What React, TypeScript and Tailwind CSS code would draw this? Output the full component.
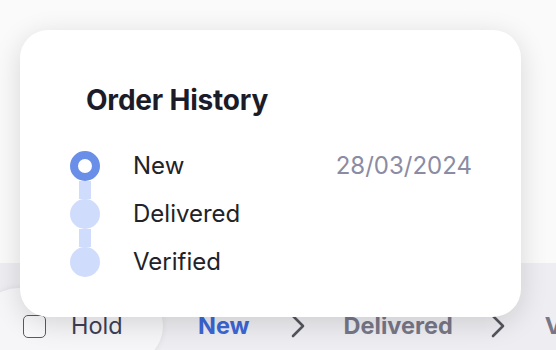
import React from 'react';

const steps = [
  { label: 'New', date: '28/03/2024', active: true },
  { label: 'Delivered', date: '', active: false },
  { label: 'Verified', date: '', active: false },
];

const Chevron = () => (
  <svg width="14" height="24" viewBox="0 0 14 24" fill="none" className="shrink-0">
    <polyline points="2,2 12,12 2,22" stroke="#55555f" strokeWidth="2.6" strokeLinecap="round" strokeLinejoin="round" />
  </svg>
);

export default function App() {
  return (
    <div
      className="relative w-[556px] h-[350px] overflow-hidden bg-[#fafafa] flex flex-col"
      style={{ fontFamily: 'Inter, "Noto Sans", sans-serif' }}
    >
      <div className="h-[263px] shrink-0" />

      {/* Status bar underneath */}
      <div className="flex-1 bg-[#eeeef2] flex items-start pt-[25px]">
        <div className="-ml-5 w-[183px] h-[76px] shrink-0 rounded-full bg-[#f6f6f8] shadow-[0_0_6px_rgba(0,0,0,0.08)] flex items-center pl-[43px]">
          <span className="w-[23px] h-[23px] rounded-[5px] border-[1.5px] border-[#5a5a66] bg-white/40" />
          <span className="ml-[25px] text-[23.5px] text-[#3e3e55]">Hold</span>
        </div>
        <div className="flex items-center h-[76px] whitespace-nowrap">
          <span className="ml-[35px] text-[23.5px] font-bold text-[#3d66d6]">New</span>
          <span className="ml-[41px]"><Chevron /></span>
          <span className="ml-[39px] text-[23.5px] font-bold text-[#777789]">Delivered</span>
          <span className="ml-[38px]"><Chevron /></span>
          <span className="ml-[40px] text-[23.5px] font-bold text-[#777789]">Verified</span>
        </div>
      </div>

      {/* Order history popover */}
      <div className="absolute left-[20px] top-[30px] w-[501px] bg-white rounded-[28px] shadow-[0_6px_28px_rgba(0,0,0,0.14)] pl-[50px] pr-[49px] pt-[54px] pb-[31px]">
        <h2 className="ml-4 text-[28px] leading-8 font-bold tracking-[-0.2px] text-[#1c1c28]">Order History</h2>
        <div className="mt-[26px]">
          {steps.map((s, i) => (
            <div key={s.label} className="flex items-center h-12">
              <div className="w-[30px] h-12 flex flex-col items-center shrink-0">
                <div className={i === 0 ? 'h-[9px] w-3' : 'h-[9px] w-3 bg-[#d0dcfb]'} />
                {s.active ? (
                  <div className="w-[30px] h-[30px] rounded-full border-[8px] border-[#6a8fe8] bg-white" />
                ) : (
                  <div className="w-[30px] h-[30px] rounded-full bg-[#d0dcfb]" />
                )}
                <div className={i === steps.length - 1 ? 'h-[9px] w-3' : 'h-[9px] w-3 bg-[#d0dcfb]'} />
              </div>
              <div className="flex-1 flex items-center justify-between ml-[33px]">
                <span className="text-[24px] text-[#222228]">{s.label}</span>
                {s.date && <span className="text-[24px] text-[#8b8ba3]">{s.date}</span>}
              </div>
            </div>
          ))}
        </div>
      </div>
    </div>
  );
}
